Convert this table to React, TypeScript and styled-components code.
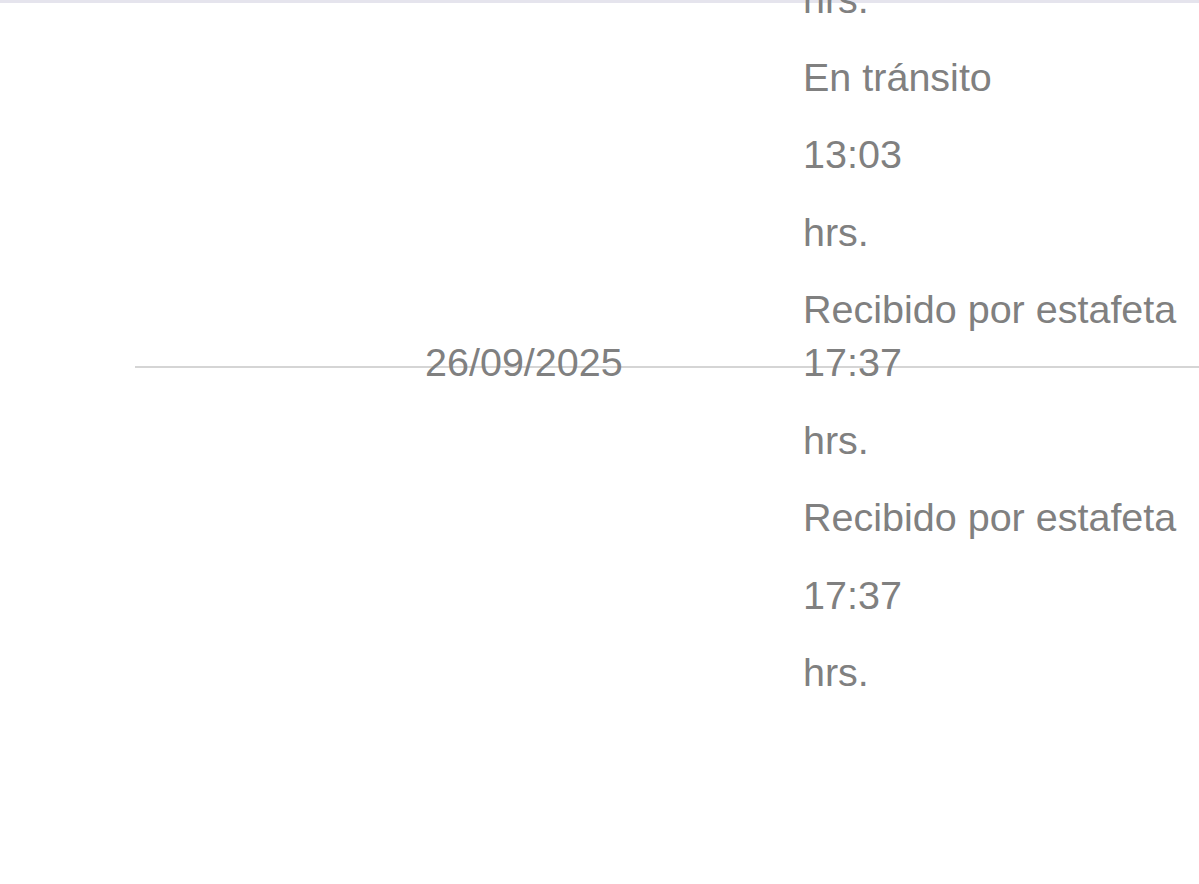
import React from "react";
import styled, { createGlobalStyle } from "styled-components";

const GlobalStyle = createGlobalStyle`
  html, body {
    margin: 0;
    padding: 0;
    background: #ffffff;
  }
  body {
    font-family: "Liberation Sans", Arial, Helvetica, sans-serif;
    color: #808080;
  }
`;

// layout
//--------------------------
const Page = styled.div`
  width: 1199px;
  height: 884px;
  overflow: hidden;
  background: #fff;
`;

const TopBar = styled.div`
  height: 3px;
  background: #e5e4ed;
`;

const Timeline = styled.div`
  margin-top: -26px;
`;

const Row = styled.div`
  display: grid;
  grid-template-columns: 425px 378px 1fr;
`;

const DividerRow = styled(Row)`
  background: linear-gradient(#d5d5d5, #d5d5d5) no-repeat 135px 26px /
    calc(100% - 135px) 2px;
  margin-bottom: 33px;
`;

const Events = styled.div`
  grid-column: 3;
`;

const DateCell = styled.div`
  grid-column: 2;
  font-size: 39.5px;
  line-height: 45px;
  white-space: nowrap;
`;

const Line = styled.p<{ $gap?: number }>`
  margin: 0 0 ${(p) => (p.$gap ?? 32.5)}px;
  font-size: 39.5px;
  line-height: 45px;
  white-space: nowrap;
`;

//--------------------------

const before = ["hrs.", "En tránsito", "13:03", "hrs."];
const after = ["hrs.", "Recibido por estafeta", "17:37", "hrs."];

const App = () => {
  return (
    <Page>
      <GlobalStyle />
      <TopBar />
      <Timeline>
        <Row>
          <Events>
            {before.map((t, i) => (
              <Line key={i}>{t}</Line>
            ))}
            <Line $gap={7.5}>Recibido por estafeta</Line>
          </Events>
        </Row>
        <DividerRow>
          <DateCell>26/09/2025</DateCell>
          <Events>
            <Line $gap={0}>17:37</Line>
          </Events>
        </DividerRow>
        <Row>
          <Events>
            {after.map((t, i) => (
              <Line key={i}>{t}</Line>
            ))}
          </Events>
        </Row>
      </Timeline>
    </Page>
  );
};

export default App;
